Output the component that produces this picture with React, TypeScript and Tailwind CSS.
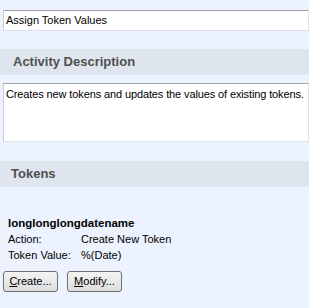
/**
 * Activity properties panel: name box, description and token details.
 */

const box =
  "bg-white border border-[#dfe3ea] border-t-[#a3a3a3] border-l-[#c9ccd2] ml-[3px]";

function SectionHeader({ title, indent }: { title: string; indent: string }) {
  return (
    <div className={`h-[26px] bg-[#dee5ee] flex items-center ${indent}`}>
      <span className="text-[13px] font-bold text-[#505050]">{title}</span>
    </div>
  );
}

function Button({ label, hotkey }: { label: string; hotkey: string }) {
  return (
    <button className="w-[55px] h-[21px] rounded-[3px] border border-[#707070] bg-gradient-to-b from-[#f4f4f4] to-[#dddddd] text-[11px] text-black leading-none">
      <span className="underline">{hotkey}</span>
      {label}
    </button>
  );
}

export default function App() {
  return (
    <div
      className="w-[309px] h-[308px] overflow-hidden bg-[#ecf3fe] pt-[10px]"
      style={{ fontFamily: '"Liberation Sans", Arial, sans-serif' }}
    >
      <div className={`${box} h-[21px] flex items-center pl-[2px] text-[11px] text-black`}>
        Assign Token Values
      </div>

      <div className="mt-[18px]">
        <SectionHeader title="Activity Description" indent="pl-[13px]" />
      </div>

      <div className={`${box} mt-[8px] h-[59px] pl-[2px] pt-[4px] text-[11px] leading-[13px] tracking-[-0.12px] text-black whitespace-nowrap`}>
        Creates new tokens and updates the values of existing tokens.
      </div>

      <div className="mt-[19px]">
        <SectionHeader title="Tokens" indent="pl-[11px]" />
      </div>

      <div className="pl-[8px] pt-[28px] text-[11px] leading-[16px] text-black">
        <div className="font-bold text-[11.5px]">longlonglongdatename</div>
        <div className="flex">
          <span className="w-[73px]">Action:</span>
          <span>Create New Token</span>
        </div>
        <div className="flex">
          <span className="w-[73px]">Token Value:</span>
          <span>%(Date)</span>
        </div>
      </div>

      <div className="flex gap-[9px] pl-[3px] mt-[8px]">
        <Button hotkey="C" label="reate..." />
        <Button hotkey="M" label="odify..." />
      </div>
    </div>
  );
}
